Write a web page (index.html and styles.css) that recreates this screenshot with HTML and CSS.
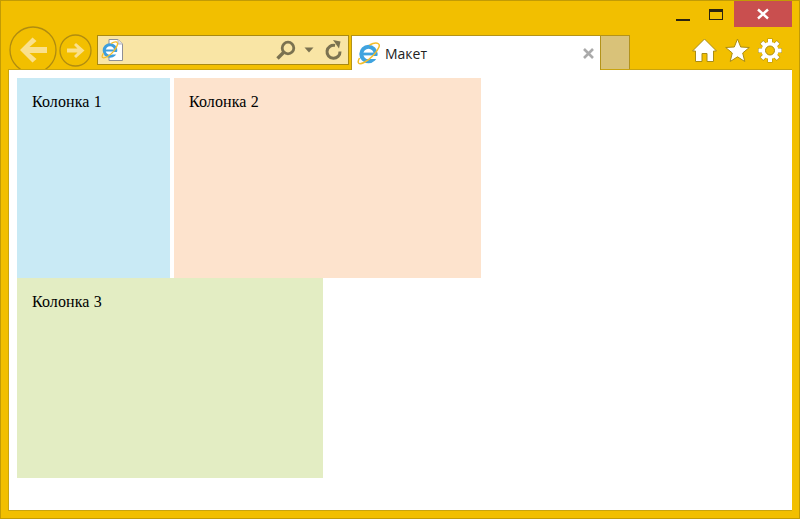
FILE: index.html
```html
<!DOCTYPE html>
<html lang="ru">
<head>
<meta charset="utf-8">
<title>Макет</title>
<link rel="stylesheet" href="styles.css">
</head>
<body>
<div class="window">
  <div class="titlebar">
    <div class="win-btn minimize"><svg width="16" height="4"><rect width="14" height="2" x="1" y="1" fill="#2b2410"/></svg></div>
    <div class="win-btn maximize"><svg width="16" height="14" viewBox="0 0 16 14"><rect x="1.500" y="1.500" width="13" height="10" fill="none" stroke="#2b2410" stroke-width="1"/><rect x="1" y="1" width="14" height="3" fill="#2b2410"/></svg></div>
    <div class="win-btn close"><svg width="14" height="12" viewBox="0 0 14 12"><path d="M2 1.500 12 10.500M12 1.500 2 10.500" stroke="#fff" stroke-width="2.400" fill="none"/></svg></div>
  </div>
  <div class="toolbar">
    <svg class="nav back" width="48" height="48" viewBox="0 0 48 48">
      <circle cx="24" cy="24" r="23" fill="#f2bf00" stroke="#b08c10" stroke-width="1.300"/>
      <path d="M38 21H20.500L27.500 15 23.500 11.500 11 24 23.500 36.500 27.500 33 20.500 27H38Z" fill="#fae08c"/>
    </svg>
    <svg class="nav forward" width="33" height="33" viewBox="0 0 33 33">
      <circle cx="16.500" cy="16.500" r="15.500" fill="#f2bf00" stroke="#b08c10" stroke-width="1.300"/>
      <path d="M8 14.500H18.500L15 11 17 9 25.500 16.500 17 24 15 22 18.500 18.500H8Z" fill="#fae08c"/>
    </svg>
    <div class="address">
      <svg class="page-icon" width="24" height="24" viewBox="0 0 24 24">
        <path d="M8 1.500H17L21.500 6V22.500H8Z" fill="#fff" stroke="#8f8f96" stroke-width="1"/>
        <path d="M17 1.500V6H21.500" fill="#e4e4ea" stroke="#b5b5bb" stroke-width="1"/>
        <circle cx="9" cy="12.500" r="5.800" fill="#fff" stroke="#3f9fdc" stroke-width="3"/>
        <path d="M4 12.500H15" stroke="#3f9fdc" stroke-width="2"/>
        <path d="M9 14H16V16.500H9Z" fill="#fff"/>
        <path d="M2.500 15C-0.500 20 2 21 6.500 18.500 11 16 15.500 10.500 16.500 6.500 17 3.500 14 3 10 5.500" fill="none" stroke="#f4bd2a" stroke-width="1.300"/>
      </svg>
      <div class="address-tools">
        <svg width="22" height="22" viewBox="0 0 22 22"><circle cx="13" cy="9" r="5.800" fill="none" stroke="#7b7250" stroke-width="2.800"/><path d="M8.500 13.500 2.500 19.500" stroke="#7b7250" stroke-width="3.400"/></svg>
        <svg class="caret" width="10" height="6" viewBox="0 0 10 6"><path d="M0.500 0.500H9.500L5 5.500Z" fill="#7b7250"/></svg>
        <svg class="refresh" width="20" height="22" viewBox="0 0 20 22"><path d="M11 6.500A6.500 6.500 0 1 0 16 12.500" fill="none" stroke="#7b7250" stroke-width="3"/><path d="M9 1 16.500 2.500 15 9.500Z" fill="#7b7250"/></svg>
      </div>
    </div>
    <div class="tab">
      <svg width="24" height="24" viewBox="0 0 24 24">
        <circle cx="11.500" cy="13" r="7.200" fill="#fff" stroke="#3fa3df" stroke-width="4"/>
        <path d="M5 13H20" stroke="#3fa3df" stroke-width="2.800"/>
        <path d="M11.500 15H21V18H11.500Z" fill="#fff"/>
        <path d="M2.500 17C-0.500 22.500 2 24 7 21.500 14 18 20 11 22 6 23.500 2 19 0.500 12.500 4" fill="none" stroke="#f4bd2a" stroke-width="1.500"/>
      </svg>
      <span class="tab-title">Макет</span>
      <svg class="tab-close" width="13" height="13" viewBox="0 0 13 13"><path d="M2 2 11 11M11 2 2 11" stroke="#aaa" stroke-width="2.600"/></svg>
    </div>
    <div class="new-tab"></div>
    <div class="tools">
      <svg width="25" height="25" viewBox="0 0 25 25"><path d="M12.500 1 24.500 13 21.500 13V23.500H15V15.500H10V23.500H3.500V13H0.500Z" fill="#fff" stroke="#a98c16" stroke-width="1"/></svg>
      <svg width="25" height="25" viewBox="0 0 25 25"><path d="M12.500 1 15.700 9 24.300 9.500 17.700 15 19.800 23.500 12.500 18.800 5.200 23.500 7.300 15 0.700 9.500 9.300 9Z" fill="#fff" stroke="#a98c16" stroke-width="1"/></svg>
      <svg width="24" height="25" viewBox="0 0 24 25">
        <g fill="#a98c16">
          <rect x="9.500" y="0.500" width="5" height="24"/>
          <rect x="9.500" y="0.500" width="5" height="24" transform="rotate(45 12 12.500)"/>
          <rect x="9.500" y="0.500" width="5" height="24" transform="rotate(90 12 12.500)"/>
          <rect x="9.500" y="0.500" width="5" height="24" transform="rotate(135 12 12.500)"/>
        </g>
        <g fill="#fff">
          <rect x="10" y="1" width="4" height="23"/>
          <rect x="10" y="1" width="4" height="23" transform="rotate(45 12 12.500)"/>
          <rect x="10" y="1" width="4" height="23" transform="rotate(90 12 12.500)"/>
          <rect x="10" y="1" width="4" height="23" transform="rotate(135 12 12.500)"/>
          <circle cx="12" cy="12.500" r="8.500"/>
        </g>
        <circle cx="12" cy="12.500" r="4.500" fill="#f2bf00" stroke="#a98c16" stroke-width="1"/>
      </svg>
    </div>
  </div>
  <main class="viewport">
    <div class="col col-1">Колонка 1</div>
    <div class="col col-2">Колонка 2</div>
    <div class="col col-3">Колонка 3</div>
  </main>
</div>
</body>
</html>
```
FILE: styles.css
```css
html, body {
  margin: 0;
  padding: 0;
}

body {
  width: 800px;
  height: 519px;
  overflow: hidden;
}

.window {
  box-sizing: border-box;
  width: 800px;
  height: 519px;
  display: flex;
  flex-direction: column;
  background: #f2bf00;
  border: 1px solid #c29b05;
  overflow: hidden;
}

.titlebar {
  height: 26px;
  flex: none;
  display: flex;
  justify-content: flex-end;
  padding-right: 7px;
}

.win-btn {
  display: flex;
  align-items: center;
  justify-content: center;
}

.minimize {
  box-sizing: border-box;
  width: 16px;
  height: 26px;
  margin-right: 17px;
  align-items: flex-end;
  padding-bottom: 5px;
}

.maximize {
  box-sizing: border-box;
  width: 16px;
  margin-right: 10px;
  align-items: flex-start;
  padding-top: 7px;
}

.close {
  width: 58px;
  background: #c94f4f;
}

.toolbar {
  height: 42px;
  flex: none;
  display: flex;
  align-items: center;
  padding: 4px 0 0 8px;
  box-sizing: border-box;
}

.nav {
  flex: none;
}

.forward {
  margin-left: 2px;
}

.address {
  box-sizing: border-box;
  width: 252px;
  height: 30px;
  margin-left: 5px;
  display: flex;
  align-items: center;
  justify-content: space-between;
  background: #f9e5a5;
  border: 1px solid #a98a12;
  padding: 0 4px 0 3px;
}

.address-tools {
  display: flex;
  align-items: center;
}

.caret {
  margin: 0 10px 0 7px;
}

.tab {
  box-sizing: border-box;
  align-self: flex-end;
  width: 250px;
  height: 35px;
  margin-left: 2px;
  margin-bottom: -1px;
  display: flex;
  align-items: center;
  background: #fff;
  border: 1px solid #b3931a;
  border-bottom: 0;
  padding-left: 5px;
  font: 14px "Open Sans", sans-serif;
  color: #222;
  position: relative;
  z-index: 2;
}

.tab-title {
  margin-left: 4px;
  flex: 1;
}

.tab-close {
  margin-right: 5px;
}

.new-tab {
  box-sizing: border-box;
  align-self: flex-end;
  width: 30px;
  height: 35px;
  margin-left: -1px;
  margin-bottom: -1px;
  background: #d9c279;
  border: 1px solid #b3931a;
  border-bottom: 0;
}

.tools {
  display: flex;
  align-items: center;
  gap: 8px;
  margin-left: auto;
  margin-right: 17px;
}

.viewport {
  flex: none;
  position: relative;
  z-index: 1;
  box-sizing: border-box;
  width: 784px;
  height: 442px;
  margin-left: 7px;
  background: #fff;
  border: 1px solid #c9a40f;
  border-width: 1px 0 1px 1px;
  padding: 8px;
  display: flex;
  flex-wrap: wrap;
  align-content: flex-start;
  gap: 0 4px;
  font: 16px "Liberation Serif", serif;
  letter-spacing: 0.1px;
  color: #000;
}

.col {
  box-sizing: border-box;
  height: 200px;
  padding: 15px;
}

.col-1 {
  width: 153px;
  background: #c9eaf5;
}

.col-2 {
  width: 307px;
  background: #fde3cd;
}

.col-3 {
  width: 306px;
  background: #e3edc3;
}
```
